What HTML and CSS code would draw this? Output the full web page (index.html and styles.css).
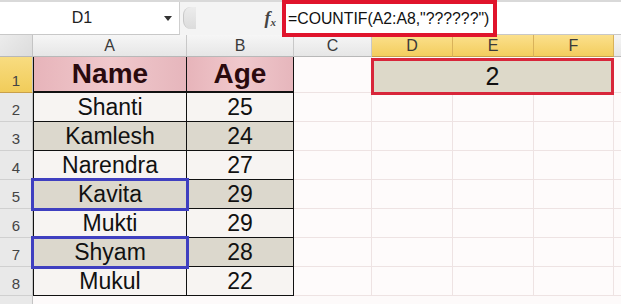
FILE: index.html
```html
<!DOCTYPE html>
<html lang="en">
<head>
  <meta charset="UTF-8">
  <title>COUNTIF</title>
  <link rel="stylesheet" href="styles.css">
</head>
<body>
  <div class="formula-bar">
    <div class="name-box">
      <span class="cell-ref">D1</span>
      <span class="drop"></span>
    </div>
    <div class="grip"></div>
    <div class="fx"><i>f</i><small>x</small></div>
    <div class="formula">=COUNTIF(A2:A8,"??????")</div>
    <div class="formula-rest"></div>
  </div>

  <div class="sheet">
    <div class="corner"></div>
    <div class="col-head">A</div>
    <div class="col-head">B</div>
    <div class="col-head">C</div>
    <div class="col-head sel">D</div>
    <div class="col-head sel">E</div>
    <div class="col-head sel">F</div>
    <div class="col-head tail"></div>

    <!-- row 1 -->
    <div class="row-head sel">1</div>
    <div class="cell head-cell bl">Name</div>
    <div class="cell head-cell">Age</div>
    <div class="cell empty"></div>
    <div class="cell result">2</div>
    <div class="cell empty tail"></div>

    <!-- rows 2-8 -->
    <div class="row-head">2</div>
    <div class="cell light bl">Shanti</div>
    <div class="cell light">25</div>
    <div class="cell empty"></div><div class="cell empty"></div><div class="cell empty"></div><div class="cell empty"></div><div class="cell empty tail"></div>

    <div class="row-head">3</div>
    <div class="cell tan bl">Kamlesh</div>
    <div class="cell tan">24</div>
    <div class="cell empty"></div><div class="cell empty"></div><div class="cell empty"></div><div class="cell empty"></div><div class="cell empty tail"></div>

    <div class="row-head">4</div>
    <div class="cell light bl">Narendra</div>
    <div class="cell light">27</div>
    <div class="cell empty"></div><div class="cell empty"></div><div class="cell empty"></div><div class="cell empty"></div><div class="cell empty tail"></div>

    <div class="row-head">5</div>
    <div class="cell tan bl match">Kavita</div>
    <div class="cell tan">29</div>
    <div class="cell empty"></div><div class="cell empty"></div><div class="cell empty"></div><div class="cell empty"></div><div class="cell empty tail"></div>

    <div class="row-head">6</div>
    <div class="cell light bl">Mukti</div>
    <div class="cell light">29</div>
    <div class="cell empty"></div><div class="cell empty"></div><div class="cell empty"></div><div class="cell empty"></div><div class="cell empty tail"></div>

    <div class="row-head">7</div>
    <div class="cell tan bl match">Shyam</div>
    <div class="cell tan">28</div>
    <div class="cell empty"></div><div class="cell empty"></div><div class="cell empty"></div><div class="cell empty"></div><div class="cell empty tail"></div>

    <div class="row-head">8</div>
    <div class="cell light bl">Mukul</div>
    <div class="cell light">22</div>
    <div class="cell empty"></div><div class="cell empty"></div><div class="cell empty"></div><div class="cell empty"></div><div class="cell empty tail"></div>

    <div class="row-head"></div>
  </div>
</body>
</html>
```

FILE: styles.css
```css
body {
  margin: 0;
  font-family: 'Liberation Sans', Arial, sans-serif;
  background-color: #fdfafa;
  width: 621px;
  height: 304px;
  overflow: hidden;
}

/* Formula bar */
.formula-bar {
  display: flex;
  height: 35px;
  background-color: #f4f4f4;
  border-top: 2px solid #d9d9d9;
  box-sizing: border-box;
}

.name-box {
  width: 180px;
  display: flex;
  align-items: center;
  background-color: #fff;
  border-right: 1px solid #cfcfcf;
  border-bottom: 1px solid #c8c8c8;
  box-sizing: border-box;
}

.cell-ref {
  flex: 1;
  text-align: center;
  font-size: 16px;
  color: #222;
}

.drop {
  width: 0;
  height: 0;
  border-left: 4px solid transparent;
  border-right: 4px solid transparent;
  border-top: 5px solid #333;
  margin-right: 7px;
}

.grip {
  width: 12px;
  height: 22px;
  margin: 5px 0 0 3px;
  border-radius: 8px 0 0 8px;
  border-left: 1px solid #c8c8c8;
  background: linear-gradient(#ececec, #dcdcdc);
}

.fx {
  width: 86px;
  display: flex;
  justify-content: flex-end;
  align-items: center;
  padding-right: 6px;
  box-sizing: border-box;
  font-family: 'Liberation Serif', serif;
  font-weight: bold;
  color: #444;
  font-size: 18px;
}

.fx small {
  font-size: 11px;
  font-style: italic;
  margin-top: 6px;
}

.formula {
  width: 215px;
  height: 37px;
  margin-top: -2px;
  border: 4px solid #e0142c;
  box-sizing: border-box;
  background-color: #fff;
  font-size: 15.8px;
  color: #111;
  display: flex;
  align-items: center;
  padding-left: 2px;
  position: relative;
  z-index: 2;
}

.formula-rest {
  flex: 1;
  background-color: #fff;
  border-bottom: 1px solid #c8c8c8;
}

/* Sheet grid */
.sheet {
  display: grid;
  grid-template-columns: 33px 154px 107px 78px 81px 81px 80px 7px;
  grid-template-rows: 22px 36px repeat(7, 29px) 10px;
}

.corner {
  background: linear-gradient(135deg, #ececec, #dcdcdc);
  border-right: 1px solid #c4c4c4;
  border-bottom: 1px solid #b8b8b8;
  box-sizing: border-box;
}

.col-head {
  background: linear-gradient(#f6f6f6, #e6e6e6);
  border-right: 1px solid #c8c8c8;
  border-bottom: 1px solid #b8b8b8;
  box-sizing: border-box;
  text-align: center;
  font-size: 16px;
  line-height: 21px;
  color: #3a3a3a;
}

.col-head.sel {
  background: linear-gradient(#fbe08c, #f3cd5e);
  border-right-color: #d9b25a;
  border-bottom-color: #c9a04a;
}

.col-head.tail {
  border-right: none;
}

.row-head {
  background-color: #e9e9e9;
  border-right: 1px solid #c4c4c4;
  border-bottom: 1px solid #d0d0d0;
  box-sizing: border-box;
  display: flex;
  align-items: flex-end;
  justify-content: center;
  padding-bottom: 3px;
  font-size: 15px;
  color: #444;
}

.row-head.sel {
  background: linear-gradient(#f8dc80, #f1cc5a);
  border-bottom-color: #c9a04a;
}

.cell {
  box-sizing: border-box;
  display: flex;
  align-items: center;
  justify-content: center;
  font-size: 23px;
  color: #111;
  border-right: 1px solid #111;
  border-bottom: 1px solid #111;
}

.cell.bl {
  border-left: 1px solid #111;
}

.head-cell {
  background: linear-gradient(90deg, #e7b4ba, #f0c8cc 50%, #e6b6bc);
  font-size: 28px;
  font-weight: bold;
  color: #2a0a0e;
  border-bottom: 2px solid #111;
}

.light {
  background-color: #f7f4f2;
}

.tan {
  background-color: #dcd8cd;
}

.match {
  outline: 3px solid #3f3fc0;
  outline-offset: -1px;
  position: relative;
  z-index: 1;
}

.empty {
  border-right: 1px solid #eee3e3;
  border-bottom: 1px solid #eee3e3;
  background-color: #fefbfb;
}

.empty.tail {
  border-right: none;
}

.result {
  grid-column: span 3;
  background-color: #ddd9c9;
  border: 3px solid #d8263a;
  font-size: 25px;
  margin: 1px 0 -2px -1px;
  position: relative;
  z-index: 1;
}
```
